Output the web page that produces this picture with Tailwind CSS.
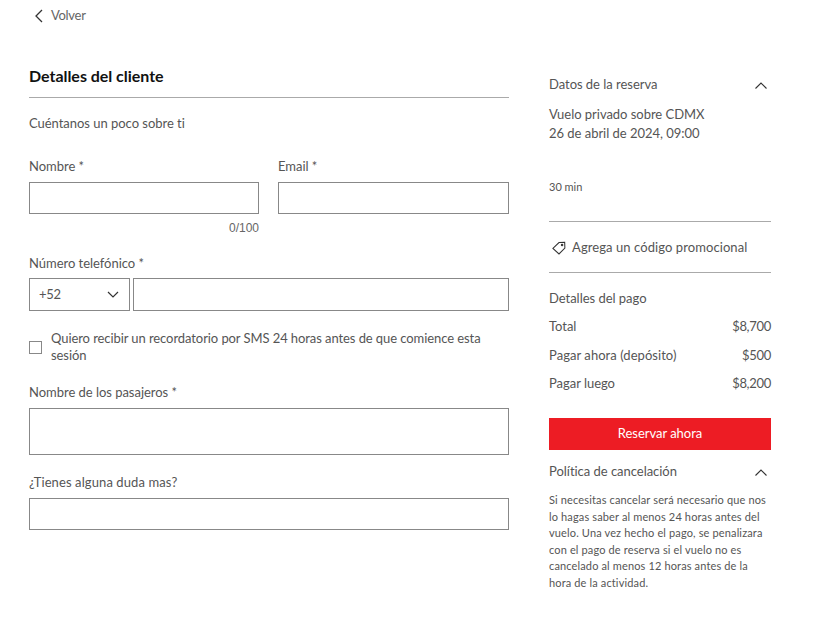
<!DOCTYPE html>
<html lang="es">

<head>
  <meta charset="UTF-8" />
  <title>Detalles del cliente</title>
  <script src="https://cdn.jsdelivr.net/npm/@tailwindcss/browser@4"></script>
</head>

<body class="bg-white h-[620px] overflow-hidden font-['Lato','Open_Sans',sans-serif] text-[13px] text-[#555] tracking-[-0.03px]">

  <a class="flex items-center h-[31px] pl-[34px] gap-[8px] text-[#666]">
    <svg class="w-[9px] h-[14px]" fill="none" stroke="#333" stroke-width="1.3" viewBox="0 0 9 14">
      <path d="M8 1 2 7l6 6" />
    </svg>
    <span class="tracking-[-0.3px]">Volver</span>
  </a>

  <div class="flex pl-[29px] pt-[31px]">
    <!-- form -->
    <div class="w-[480px]">
      <h2 class="h-[32px] pt-[3px] text-[16px] leading-[22px] font-bold text-[#111] border-b border-[#aaa] box-content">Detalles del cliente</h2>
      <p class="mt-[16px] leading-[18px]">Cuéntanos un poco sobre ti</p>

      <div class="flex gap-[19px] mt-[25px]">
        <div class="w-[230px]">
          <label class="block leading-[18px] mb-[7px]">Nombre *</label>
          <input class="block w-full h-[32px] border border-[#888]" />
          <p class="text-right text-[12px] leading-[14px] mt-[7px] tracking-normal font-['Liberation_Sans',sans-serif] text-[#666]">0/100</p>
        </div>
        <div class="w-[231px]">
          <label class="block leading-[18px] mb-[7px]">Email *</label>
          <input class="block w-full h-[32px] border border-[#888]" />
        </div>
      </div>

      <label class="block leading-[18px] mt-[19px] mb-[6px]">Número telefónico *</label>
      <div class="flex gap-[3px]">
        <div class="flex items-center justify-between w-[101px] h-[33px] border border-[#888] pl-[9px] pr-[10px]">
          <span class="tracking-[-0.3px]">+52</span>
          <svg class="w-[12px] h-[7px]" fill="none" stroke="#333" stroke-width="1.2" viewBox="0 0 12 7">
            <path d="M1 1l5 5 5-5" />
          </svg>
        </div>
        <input class="flex-1 h-[33px] border border-[#888]" />
      </div>

      <div class="flex items-center gap-[9px] mt-[19px]">
        <span class="w-[13px] h-[13px] border border-[#888] shrink-0"></span>
        <p class="leading-[17px] tracking-[-0.08px]">Quiero recibir un recordatorio por SMS 24 horas antes de que comience esta sesión</p>
      </div>

      <label class="block leading-[18px] mt-[19px] mb-[7px]">Nombre de los pasajeros *</label>
      <div class="h-[47px] border border-[#888]"></div>

      <label class="block leading-[18px] mt-[18px] mb-[7px] tracking-[0.1px]">¿Tienes alguna duda mas?</label>
      <input class="block w-full h-[32px] border border-[#888]" />
    </div>

    <!-- summary -->
    <aside class="w-[222px] ml-[40px] mt-[7px]">
      <div class="flex items-center justify-between h-[18px] mt-[7px]">
        <span>Datos de la reserva</span>
        <svg class="w-[12px] h-[7px] mr-[4px]" fill="none" stroke="#333" stroke-width="1.1" viewBox="0 0 12 7">
          <path d="M.5 6.5 6 1l5.5 5.5" />
        </svg>
      </div>
      <p class="mt-[11px] leading-[19px]">Vuelo privado sobre CDMX<br />26 de abril de 2024, 09:00</p>
      <p class="mt-[37px] text-[11px] leading-[14px] tracking-normal">30 min</p>
      <div class="mt-[27px] border-t border-[#aaa]"></div>
      <div class="flex items-center gap-[6px] h-[50px] pl-[3px] pt-[1px]">
        <svg class="w-[14px] h-[14px]" fill="none" stroke="#333" stroke-width="1.1" viewBox="0 0 15 14">
          <path d="M1 7.5 7.5 1.2 13.6 1l.2 6-6.3 6.4z" />
          <circle cx="10.8" cy="3.8" r=".8" />
        </svg>
        <span class="tracking-[0.08px]">Agrega un código promocional</span>
      </div>
      <div class="border-t border-[#aaa]"></div>

      <p class="mt-[16px] leading-[18px]">Detalles del pago</p>
      <div class="flex flex-col gap-[10.5px] mt-[10px] leading-[18px]">
        <div class="flex justify-between"><span>Total</span><span class="tracking-[-0.3px]">$8,700</span></div>
        <div class="flex justify-between"><span class="tracking-[0.05px]">Pagar ahora (depósito)</span><span class="tracking-[-0.3px]">$500</span></div>
        <div class="flex justify-between"><span>Pagar luego</span><span class="tracking-[-0.3px]">$8,200</span></div>
      </div>

      <button class="block w-full h-[32px] mt-[26px] bg-[#ed1c24] text-white text-center">Reservar ahora</button>

      <div class="flex items-center justify-between h-[18px] mt-[13px]">
        <span>Política de cancelación</span>
        <svg class="w-[12px] h-[7px] mr-[4px]" fill="none" stroke="#333" stroke-width="1.1" viewBox="0 0 12 7">
          <path d="M.5 6.5 6 1l5.5 5.5" />
        </svg>
      </div>
      <p class="mt-[11px] text-[11px] leading-[16.6px] tracking-[0.14px]">Si necesitas cancelar será necesario que nos lo hagas saber al menos 24 horas antes del vuelo. Una vez hecho el pago, se penalizara con el pago de reserva si el vuelo no es cancelado al menos 12 horas antes de la hora de la actividad.</p>
    </aside>
  </div>
</body>

</html>
